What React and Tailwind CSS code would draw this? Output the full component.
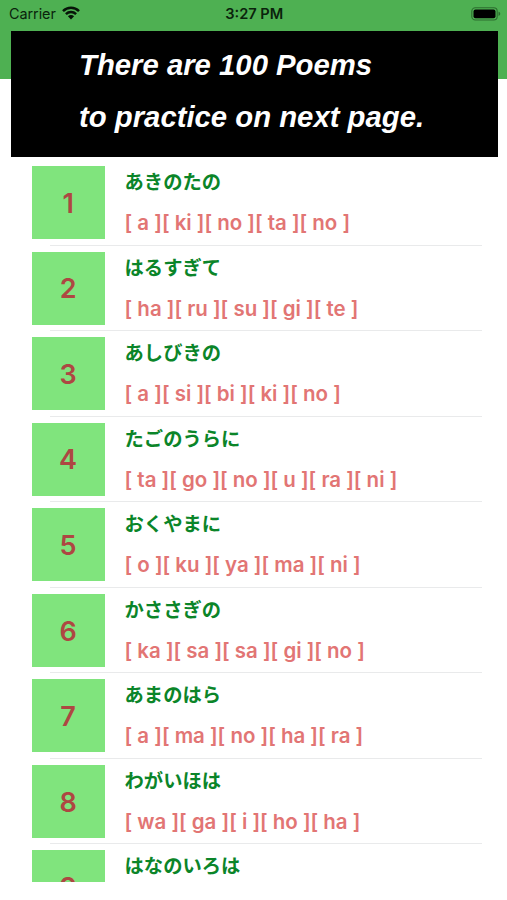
const poems = [
  { kana: 'あきのたの', romaji: '[ a ][ ki ][ no ][ ta ][ no ]' },
  { kana: 'はるすぎて', romaji: '[ ha ][ ru ][ su ][ gi ][ te ]' },
  { kana: 'あしびきの', romaji: '[ a ][ si ][ bi ][ ki ][ no ]' },
  { kana: 'たごのうらに', romaji: '[ ta ][ go ][ no ][ u ][ ra ][ ni ]' },
  { kana: 'おくやまに', romaji: '[ o ][ ku ][ ya ][ ma ][ ni ]' },
  { kana: 'かささぎの', romaji: '[ ka ][ sa ][ sa ][ gi ][ no ]' },
  { kana: 'あまのはら', romaji: '[ a ][ ma ][ no ][ ha ][ ra ]' },
  { kana: 'わがいほは', romaji: '[ wa ][ ga ][ i ][ ho ][ ha ]' },
  { kana: 'はなのいろは', romaji: '' },
];

function WifiIcon() {
  return (
    <svg className="h-[14px] w-[18px]" viewBox="0 0 18 14" fill="none" stroke="#071408" strokeWidth="2.5">
      <path d="M1 5.2C5.5 .7 12.5 .7 17 5.2" />
      <path d="M3.9 8.2C6.8 5.4 11.2 5.4 14.1 8.2" />
      <path d="M9 13.4 5.9 10.3C7.7 8.7 10.3 8.7 12.1 10.3Z" fill="#071408" stroke="none" />
    </svg>
  );
}

function BatteryIcon() {
  return (
    <svg className="h-[14px] w-[30px]" viewBox="0 0 30 14" fill="none">
      <rect x=".8" y=".8" width="25.4" height="12.2" rx="3.5" stroke="#2c6d2f" strokeWidth="1.1" />
      <rect x="2.5" y="2.5" width="22" height="8.8" rx="2" fill="#000" />
      <path d="M27.5 4.8C29.8 5.5 29.8 8.2 27.5 9Z" fill="#2c6d2f" />
    </svg>
  );
}

function StatusBar() {
  return (
    <div className="flex h-[27px] items-center justify-between pr-[6.5px] pl-[9px] text-[#0a230c]">
      <div className="flex w-[187px] items-center gap-[6px]">
        <span className="text-[14.4px] tracking-[-0.05px]">Carrier</span>
        <WifiIcon />
      </div>
      <span className="pt-[2px] text-center text-[14.6px] font-semibold">3:27 PM</span>
      <div className="flex w-[188px] justify-end">
        <BatteryIcon />
      </div>
    </div>
  );
}

function PoemRow({ number, kana, romaji }) {
  return (
    <li className="flex h-[85.55px] shrink-0 flex-col">
      <div className="flex h-[78.5px] gap-[20px]">
        <div className="flex h-[73.2px] w-[73px] shrink-0 items-center justify-center bg-[#80e47d] pt-[3px] text-[27px] font-semibold text-[#ae4742]">
          {number}
        </div>
        <div className="flex flex-col whitespace-nowrap">
          <p className="h-[30px] font-['Noto_Sans_CJK_JP',sans-serif] text-[19.3px] leading-[30px] font-bold text-[#0b8529]">
            {kana}
          </p>
          <p className="mt-[12px] h-[30px] text-[20.5px] leading-[30px] font-semibold tracking-[-0.02px] text-[#e27574]">{romaji}</p>
        </div>
      </div>
      <div className="mr-[25px] ml-[18.5px] h-px bg-[#e9eaeb]" />
    </li>
  );
}

export default function App() {
  return (
    <div className="flex h-[900px] w-[507px] flex-col overflow-hidden bg-white font-['Inter','Noto_Sans_CJK_JP',sans-serif]">
      <header className="h-[79px] shrink-0 bg-[#4eb052]">
        <StatusBar />
      </header>
      <section className="mx-[11px] mt-[-48px] h-[126px] w-[486.5px] shrink-0 bg-black pt-[8px] pl-[68px] font-['Liberation_Sans',sans-serif] text-[29.3px] leading-[51.5px] font-bold whitespace-nowrap text-white italic">
        <p>There are 100 Poems</p>
        <p>to practice on next page.</p>
      </section>
      <ul className="mt-[9px] ml-[31.6px] flex h-[715.5px] shrink-0 flex-col overflow-hidden">
        {poems.map((poem, index) => (
          <PoemRow key={poem.kana} number={index + 1} kana={poem.kana} romaji={poem.romaji} />
        ))}
      </ul>
    </div>
  );
}
